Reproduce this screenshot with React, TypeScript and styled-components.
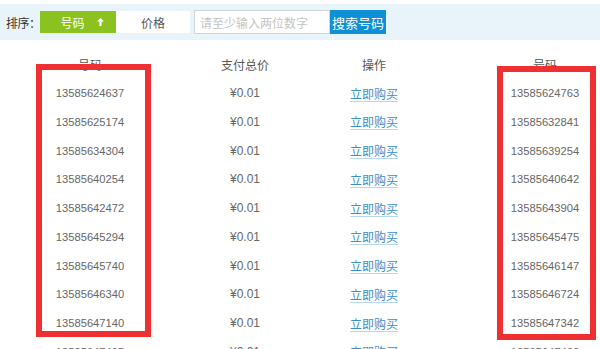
import React from 'react';
import styled, { createGlobalStyle } from 'styled-components';

const GlobalStyle = createGlobalStyle`
  html, body {
    margin: 0;
    padding: 0;
    background: #ffffff;
    overflow: hidden;
  }
  body {
    font-family: "Liberation Sans", "Noto Sans CJK SC", sans-serif;
    color: #555;
  }
`;

const Page = styled.div`
  position: relative;
  width: 600px;
  height: 349px;
  overflow: hidden;
  padding-top: 4px;
  box-sizing: border-box;
`;

// Sort / search toolbar
const Toolbar = styled.div`
  display: flex;
  align-items: center;
  height: 36px;
  background: #e9f3fa;
  padding-left: 6px;
`;

const SortLabel = styled.span`
  flex: none;
  width: 34px;
  font-size: 12px;
  color: #333;
  white-space: nowrap;
  letter-spacing: -0.5px;
`;

const SortButton = styled.div<{ $active?: boolean }>`
  flex: none;
  display: flex;
  align-items: center;
  justify-content: center;
  gap: 12px;
  width: ${(p) => (p.$active ? 76 : 74)}px;
  height: 22px;
  font-size: 12px;
  background: ${(p) => (p.$active ? '#8cc21f' : '#ffffff')};
  color: ${(p) => (p.$active ? '#ffffff' : '#555')};
  padding-left: ${(p) => (p.$active ? 8 : 0)}px;
  box-sizing: border-box;
`;

const Arrow = styled.svg`
  width: 7px;
  height: 8px;
`;

const SearchInput = styled.div`
  flex: none;
  margin-left: 4px;
  width: 136px;
  height: 24px;
  box-sizing: border-box;
  border: 1px solid #cfd6dc;
  background: #fff;
  font-size: 12px;
  color: #c4c4c4;
  display: flex;
  align-items: center;
  padding-left: 5px;
`;

const SearchButton = styled.div`
  flex: none;
  width: 56px;
  height: 24px;
  background: #0e8fd6;
  color: #fff;
  font-size: 13px;
  display: flex;
  align-items: center;
  justify-content: center;
`;

// Result tables
const Tables = styled.div`
  display: flex;
  margin-top: 10px;
`;

const Table = styled.div`
  flex: none;
  width: 455px;
  display: grid;
  grid-template-columns: 180px 130px 128px;
  grid-auto-rows: 28.75px;
  align-items: center;
`;

const HeadCell = styled.div`
  text-align: center;
  font-size: 12px;
  color: #555;
`;

const NumCell = styled.div`
  text-align: center;
  font-size: 11.2px;
  color: #666;
`;

const PriceCell = styled.div`
  text-align: center;
  font-size: 12px;
  color: #666;
`;

const BuyLink = styled.div`
  text-align: center;
  font-size: 12px;
  color: #3a8fcc;
  text-decoration: underline;
  text-decoration-color: #b5d6ee;
  text-underline-offset: 2px;
`;

// Red annotation frames drawn over the table
const Frame = styled.div<{ $left: number; $top: number; $w: number; $h: number }>`
  position: absolute;
  left: ${(p) => p.$left}px;
  top: ${(p) => p.$top}px;
  width: ${(p) => p.$w}px;
  height: ${(p) => p.$h}px;
  box-sizing: border-box;
  border: 6.5px solid #ef3033;
`;

const leftNumbers = [
  '13585624637',
  '13585625174',
  '13585634304',
  '13585640254',
  '13585642472',
  '13585645294',
  '13585645740',
  '13585646340',
  '13585647140',
  '13585647495',
];

const rightNumbers = [
  '13585624763',
  '13585632841',
  '13585639254',
  '13585640642',
  '13585643904',
  '13585645475',
  '13585646147',
  '13585646724',
  '13585647342',
  '13585647409',
];

const ResultTable: React.FC<{ numbers: string[] }> = ({ numbers }) => (
  <Table>
    <HeadCell>号码</HeadCell>
    <HeadCell>支付总价</HeadCell>
    <HeadCell>操作</HeadCell>
    {numbers.map((n) => (
      <React.Fragment key={n}>
        <NumCell>{n}</NumCell>
        <PriceCell>¥0.01</PriceCell>
        <BuyLink>立即购买</BuyLink>
      </React.Fragment>
    ))}
  </Table>
);

const App: React.FC = () => (
  <Page>
    <GlobalStyle />
    <Toolbar>
      <SortLabel>排序：</SortLabel>
      <SortButton $active>
        <span>号码</span>
        <Arrow viewBox="0 0 7 8">
          <path d="M3.5 0 L7 3.5 L4.6 3.5 L4.6 8 L2.4 8 L2.4 3.5 L0 3.5 Z" fill="#fff" />
        </Arrow>
      </SortButton>
      <SortButton>价格</SortButton>
      <SearchInput>请至少输入两位数字</SearchInput>
      <SearchButton>搜索号码</SearchButton>
    </Toolbar>
    <Tables>
      <ResultTable numbers={leftNumbers} />
      <ResultTable numbers={rightNumbers} />
    </Tables>
    <Frame $left={36} $top={64} $w={115} $h={273} />
    <Frame $left={497} $top={66} $w={99} $h={274} />
  </Page>
);

export default App;
